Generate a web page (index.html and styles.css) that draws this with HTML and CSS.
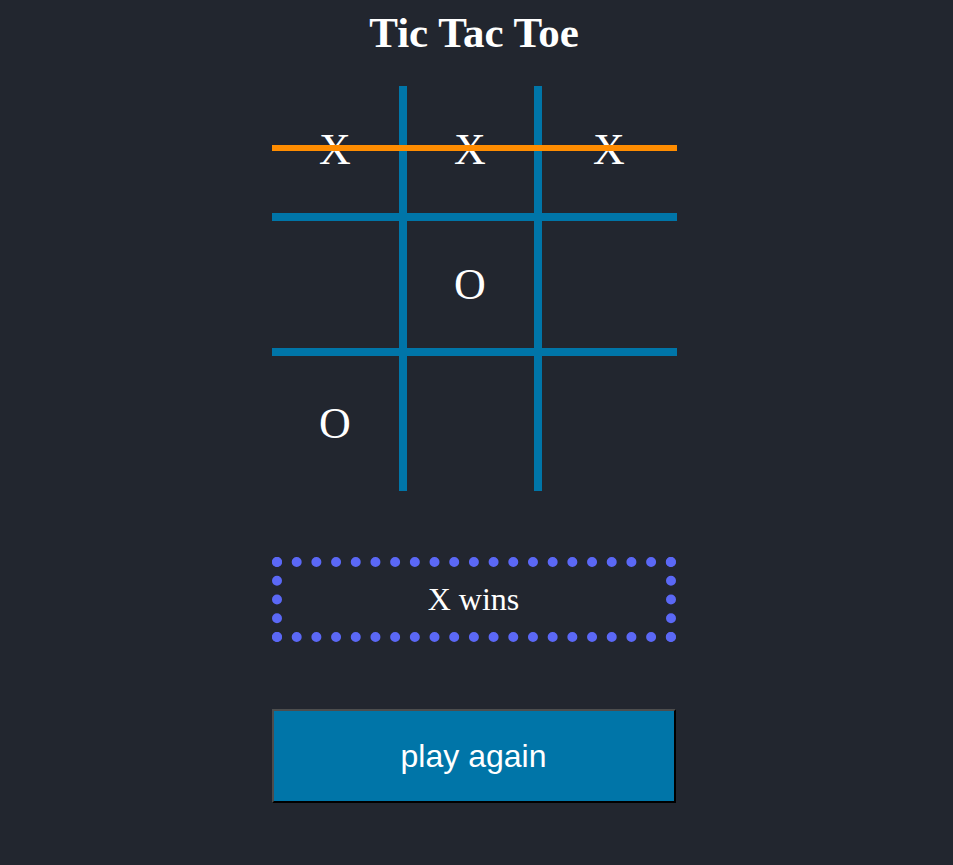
FILE: index.html
```html
<!DOCTYPE html>
<html>
<head>
<meta charset="utf-8">
<title>Tic Tac Toe</title>
<link rel="stylesheet" href="styles.css">
</head>
<body>
<main class="app">
  <h1 class="title">Tic Tac Toe</h1>
  <div class="board">
    <div class="cell r1 c1">X</div>
    <div class="cell r1 c2">X</div>
    <div class="cell r1 c3">X</div>
    <div class="cell r2 c1"></div>
    <div class="cell r2 c2">O</div>
    <div class="cell r2 c3"></div>
    <div class="cell r3 c1">O</div>
    <div class="cell r3 c2"></div>
    <div class="cell r3 c3"></div>
    <div class="win-line"></div>
  </div>
  <div class="status">X wins</div>
  <button class="again">play again</button>
</main>
</body>
</html>
```
FILE: styles.css
```css
html, body {
  margin: 0;
  padding: 0;
  background: #22262f;
}
body {
  padding-right: 5px;
  min-height: 865px;
}
.app {
  width: 405px;
  margin: 0 auto;
  display: flex;
  flex-direction: column;
  align-items: stretch;
}
.title {
  margin: 10px 0 30px;
  font-family: "Liberation Serif", serif;
  font-weight: bold;
  font-size: 43px;
  line-height: 46px;
  color: #ffffff;
  text-align: center;
}
.board {
  position: relative;
  display: grid;
  grid-template-columns: repeat(3, 135px);
  grid-template-rows: repeat(3, 135px);
}
.cell {
  box-sizing: border-box;
  display: flex;
  align-items: center;
  justify-content: center;
  font-family: "Liberation Serif", serif;
  font-size: 44px;
  color: #ffffff;
}
.c1, .c2 { border-right: 8px solid #0075a8; }
.r1, .r2 { border-bottom: 8px solid #0075a8; }
.win-line {
  position: absolute;
  left: 0;
  right: 0;
  top: 59px;
  height: 6px;
  background: #ff8c00;
}
.status {
  box-sizing: border-box;
  margin-top: 66px;
  width: 404px;
  height: 85px;
  border: 10px dotted #5b68f6;
  display: flex;
  align-items: center;
  justify-content: center;
  font-family: "Liberation Serif", serif;
  font-size: 32px;
  color: #ffffff;
}
.again {
  box-sizing: border-box;
  margin-top: 67px;
  width: 404px;
  height: 94px;
  background: #0075a8;
  border-style: solid;
  border-width: 2px;
  border-color: #4d4d4d #000000 #000000 #4d4d4d;
  font-family: "Liberation Sans", Arial, sans-serif;
  font-size: 32px;
  color: #ffffff;
  padding: 0;
}
```
